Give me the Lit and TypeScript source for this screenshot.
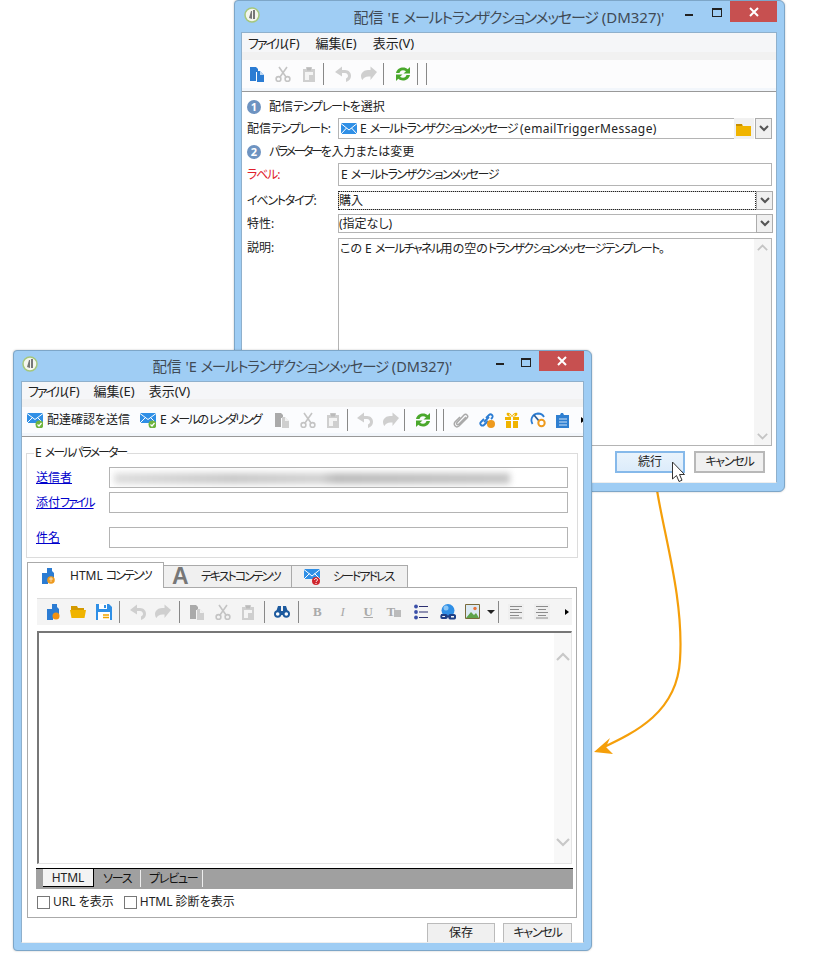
import { LitElement, html, css, svg } from "lit";
import { customElement } from "lit/decorators.js";

const G = "#cfcfcf";
const icons: Record<string, any> = {
  copy: svg`<path d="M1 1h6l2 2v3h-2v9H1z" fill="#2b7cd3"/><path d="M8 5h3l4 4v7H8z" fill="#2b7cd3"/><path d="M11 5v4h4" fill="#fff" opacity=".7"/>`,
  copyg: svg`<path d="M1 1h6l2 2v3h-2v9H1z" fill="#aaa"/><path d="M8 5h3l4 4v7H8z" fill="${G}"/><path d="M11 5v4h4" fill="#fff" opacity=".7"/>`,
  cut: svg`<g fill="none" stroke="#c4c4c4" stroke-width="1.6"><circle cx="3.5" cy="13" r="2.4"/><circle cx="12.5" cy="13" r="2.4"/><path d="M5 11 12 1M11 11 4 1"/></g>`,
  paste: svg`<path d="M2 3h3V1h6v2h3v13H2z" fill="${G}"/><path d="M4 6h8v8H4z" fill="#f4f4f4"/><path d="M6 1.500h4v3H6z" fill="#bbb"/><path d="M8 9h4v5H8z" fill="${G}"/>`,
  undo: svg`<path d="M0 6 7 .5V4h3c4 0 6 3 6 6s-2 5-5 6v-3.500c1-.5 2-1.200 2-2.500s-1-3-3-3H7v3.500z" fill="${G}"/>`,
  redo: svg`<path d="M16 6 9.500.5V4H7C3 4 0 7 0 10c0 1.500.5 3 1.500 4 1-2 3-3.500 6-3.500h2v3.500z" fill="${G}"/>`,
  refresh: svg`<g fill="#4aa82c"><path d="M1 7C2 3 5 1.500 8 1.500c2 0 3.500.7 4.700 1.700L15 1v6.500H8.500L11 5.200C10 4.500 9 4.200 8 4.200 6 4.200 5 5.500 4.500 7z"/><path d="M15 9c-1 4-4 5.500-7 5.500-2 0-3.500-.7-4.700-1.700L1 15V8.500h6.500L5 10.800c1 .7 2 1 3 1 2 0 3-1.300 3.500-2.800z"/></g>`,
  mail: svg`<path d="M0 2h16v11H0z" fill="#2f8fe6"/><path d="M0 2.500 8 9l8-6.500M0 13l5.500-6M16 13l-5.500-6" fill="none" stroke="#fff" stroke-width="1"/>`,
  mailcheck: svg`<path d="M0 1h16v10H0z" fill="#2f8fe6"/><path d="M0 1.500 8 7.500l8-6M0 11l5.500-5.500M16 11l-5.500-5.500" fill="none" stroke="#fff"/><circle cx="12.500" cy="12.500" r="4" fill="#6fb43f"/><path d="m10.500 12.500 1.500 1.500 2.500-3" fill="none" stroke="#fff" stroke-width="1.200"/>`,
  mailq: svg`<path d="M0 0h16v10H0z" fill="#2f8fe6"/><path d="M0 .5 8 7l8-6.500M0 10l5.500-5.500M16 10l-5.500-5.500" fill="none" stroke="#fff"/><circle cx="12" cy="12" r="4" fill="#d0262d"/><path d="M10.500 11c0-2 3-2 3 0 0 1-1.500 1-1.500 2m0 1v1" fill="none" stroke="#fff"/>`,
  attach: svg`<path d="M13 5 6 12c-1.500 1.500-3 0-2-1.500L11 3c2-2 5 1 3 3l-8 8c-3 2.500-6-1-4-4l5-5" fill="none" stroke="#aaa" stroke-width="1.500"/>`,
  link: svg`<g fill="none" stroke="#2b7cd3" stroke-width="1.800"><path d="M7 6 10 3c2-2 5 1 3 3l-1 1M9 9l-4 4c-2 2-5-1-3-3l3-3"/><path d="m5 10 5-5"/></g><circle cx="12" cy="12" r="4" fill="#ee9a1e"/>`,
  gift: svg`<g fill="#f0b400"><path d="M1 5h6v3H1zM9 5h6v3H9zM2 9h5v7H2zM9 9h5v7H9z"/><path d="M3 1c2-1 4 1 5 3 1-2 3-4 5-3 1 1 0 3-2 3.500H5C3 4 2 2 3 1z"/></g><path d="M5 2.500 7 4M11 2.500 9 4" stroke="#fff"/>`,
  gauge: svg`<path d="M2.500 12C0 8 2 2 8 1.500c3 0 5 1.500 6 3.500" fill="none" stroke="#2b7cd3" stroke-width="1.800"/><path d="M4 3 9 9" stroke="#2b5f9a" stroke-width="1.800"/><circle cx="11.500" cy="11" r="3.200" fill="#fff" stroke="#ee9a1e" stroke-width="2"/>`,
  clip: svg`<path d="M1 3h4l1-2h2l1 2h5v13H1z" fill="#2f7fd1"/><path d="M4 7h8M4 10h8M4 13h8" stroke="#cfe3f7"/>`,
  htmlfile: svg`<path d="M2 5h5V0h5v3l2 2v7H8v4H2z" fill="#2b7cd3"/><circle cx="11" cy="12" r="3.800" fill="#ee9a1e"/><path d="M9 11h4M11 9v5" stroke="#fff" stroke-width=".6"/>`,
  newfile: svg`<path d="M2 5h5V0h5v3l2 2v6H8v5H2z" fill="#2b7cd3"/><circle cx="11" cy="12" r="3.500" fill="#f29111"/>`,
  folder: svg`<path d="M0 3h6l1 2H15v10H0z" fill="#f0b400"/><path d="M0 3h6v2H0z" fill="#c88f00"/>`,
  open: svg`<path d="M1 2h6l1 2h6v2H1z" fill="#d49a00"/><path d="M0 6h16l-1.500 8h-13z" fill="#f0b400"/>`,
  save: svg`<path d="M0 0h13l3 3v13H0z" fill="#2f8fe6"/><path d="M3 0h8v5H3z" fill="#fff"/><path d="M8 1h2v3H8z" fill="#2f8fe6"/><path d="M2 8h12v8H2z" fill="#fff"/><path d="M7 11h6M7 13.500h6" stroke="#f0a400" stroke-width="1.500"/>`,
  binoc: svg`<g fill="#1d5a9e"><circle cx="3.700" cy="10" r="3.700"/><circle cx="12.300" cy="10" r="3.700"/><path d="M2 8l2-6h3v6zM14 8l-2-6H9v6zM7 7h2v4H7z"/></g><circle cx="3.700" cy="10" r="1.800" fill="#fff"/><circle cx="12.300" cy="10" r="1.800" fill="#fff"/>`,
  list: svg`<g fill="#3a4fa8"><circle cx="2" cy="2.500" r="1.900"/><circle cx="2" cy="8" r="1.900"/><circle cx="2" cy="13.500" r="1.900"/></g><path d="M5 2.500h9M5 8h9M5 13.500h9" stroke="#2c2f70" stroke-width="1.200"/>`,
  globe: svg`<circle cx="8" cy="6.500" r="6.500" fill="#2f8fe6"/><circle cx="6" cy="4" r="2.500" fill="#8cc6f5"/><g fill="none" stroke="#1d3f86" stroke-width="2"><path d="M1 11h5c1 0 1 3 0 3H2c-1 0-1-3 0-3M10 11h4c1.500 0 1.500 3.500 0 3.500h-4c-1 0-1-3.500 0-3.500M5 12.500h6"/></g>`,
  image: svg`<path d="M.5.500h14v14H.5z" fill="#dbe9f3" stroke="#7a6a3a"/><path d="M1 14l5-6 3 3 2-2 3 5z" fill="#5ea34a"/><circle cx="10" cy="4.500" r="1.700" fill="#e8743b"/>`,
  alignl: svg`<path d="M0 0h16v16H0z" fill="#efefef"/><path d="M2 2.500h12M2 5.500h9M2 8.500h12M2 11.500h9M2 14h12" stroke="#8c8c8c"/>`,
  alignc: svg`<path d="M0 0h16v16H0z" fill="#efefef"/><path d="M2 2.500h12M4 5.500h8M2 8.500h12M4 11.500h8M2 14h12" stroke="#8c8c8c"/>`,
  logo: svg`<circle cx="8" cy="8" r="7" fill="#f4f6ee" stroke="#a5c77c" stroke-width="1.500"/><path d="M5 11 7 4h1v8zM9 3h2v9H9z" fill="#777"/>`,
};

/* Katakana in the original UI font is condensed: wrap each run so it can be tightened. */
const t = (s: string) => s.split(/([\u30A0-\u30FF]+)/).map((p, i) => (i % 2 ? html`<span class="k">${p}</span>` : p));
const ic = (n: string) => html`<svg class="ic" width="16" height="16" viewBox="0 0 16 16">${icons[n]}</svg>`;
const tool = (n: string) => html`<span class="tool">${ic(n)}</span>`;
const sep = html`<i class="sep"></i>`;
const chev = (up = false) => html`<svg class="chev" width="14" height="9" viewBox="0 0 14 9"><path d="${up ? "M1 8 7 2l6 6" : "M1 1l6 6 6-6"}" fill="none" stroke="currentColor" stroke-width="2.200"/></svg>`;
const combo = html`<span class="cbtn"><svg width="10" height="7" viewBox="0 0 10 7"><path d="M1 1l4 4 4-4" fill="none" stroke="#555" stroke-width="2"/></svg></span>`;

const caption = (s: string) => html`<div class="titlebar">
  <svg class="logo" width="16" height="16" viewBox="0 0 16 16">${icons.logo}</svg>
  <div class="title">${t(s)}</div>
  <div class="caps"><span class="cap min"><i></i></span><span class="cap max"><i></i></span><span class="close">
    <svg width="10" height="10" viewBox="0 0 10 10"><path d="M1 1l8 8M9 1 1 9" stroke="#fff" stroke-width="2"/></svg></span></div>
</div>`;
const menu = html`<div class="menu"><span>${t("ファイル(F)")}</span><span>編集(E)</span><span>表示(V)</span></div><div class="band"></div>`;

@customElement("app-root")
export class AppRoot extends LitElement {
  static styles = css`
    :host { display: block; position: relative; width: 818px; height: 970px; background: #fff; overflow: hidden;
      font: 12px/16px "Noto Sans", "Noto Sans CJK JP", sans-serif; font-feature-settings: "palt"; color: #222; }
    * { box-sizing: border-box; }
    .k { letter-spacing: -1.2px; }
    .menu .k { letter-spacing: -2px; }
    .box .k { letter-spacing: -1.5px; }
    .atext .k { letter-spacing: -1.6px; }
    .step.b .k { letter-spacing: -2.4px; }
    .tl .k, .tab .k, legend .k, .fr a .k { letter-spacing: -2px; }
    .lat { letter-spacing: .38px; }
    .flow { position: absolute; left: 0; top: 0; }
    .pointer { position: absolute; left: 671px; top: 461px; z-index: 5; }
    .win { position: absolute; display: flex; flex-direction: column; background: #9fcdf4; border: 1px solid #7da6c8;
      border-radius: 4px 6px 6px 4px; padding: 0 7px 8px 6px; box-shadow: 0 0 2px rgba(0,0,0,.25); }
    .w1 { left: 234px; top: 0; width: 551px; height: 492px; }
    .w2 { left: 13px; top: 350px; width: 579px; height: 601px; z-index: 2; padding: 0 7px 7px 7px; }
    .titlebar { display: flex; align-items: center; height: 31px; flex: none; position: relative; }
    .w2 .titlebar { height: 30px; }
    .logo { margin: -4px 0 0 3px; flex: none; }
    .w2 .logo { margin-left: 1px; }
    .title { position: absolute; left: 0; right: 0; top: 6px; text-align: center; font-size: 15px; line-height: 20px; color: #3f4a55; white-space: nowrap; }
    .w2 .title { font-size: 14.500px; top: 5px; }
    .caps { margin-left: auto; align-self: flex-start; display: flex; position: relative; }
    .cap { width: 28px; height: 21px; position: relative; display: block; }
    .cap i { position: absolute; display: block; }
    .min i { left: 11px; top: 13px; width: 8px; height: 2px; background: #222; }
    .max i { left: 10px; top: 7px; width: 10px; height: 9px; border: 1px solid #222; border-top-width: 2px; }
    .w2 .min i { left: 9px; top: 12px; }
    .w2 .max i { left: 8px; }
    .close { width: 47px; height: 21px; background: #c75050; display: flex; align-items: center; justify-content: center; }
    .w2 .close { width: 45px; height: 20px; }
    .w2 .cap { width: 26px; }
    .client { flex: 1; min-height: 0; background: #fff; border: 1px solid #8fb0cc; border-bottom-color: #eee; overflow: hidden; display: flex; flex-direction: column; }
    .menu { background: #f5f6f8; display: flex; align-items: center; flex: none; white-space: nowrap; font-size: 13px; }
    .w1 .menu { height: 19px; padding-left: 6px; gap: 16px; }
    .w2 .menu { height: 17px; padding-left: 6px; gap: 14px; }
    .band { height: 8px; background: #f1f1f1; flex: none; }
    .tb { display: flex; align-items: center; flex: none; background: #fcfcfd; white-space: nowrap; }
    .w1 .mainbar { height: 28px; padding-left: 2px; }
    .w2 .mainbar { height: 26px; padding-left: 5px; background: #fbfcfe; }
    .rule { height: 4px; flex: none; background: #f2f6fb; border-bottom: 1px solid #999; }
    .tool { display: inline-flex; width: 26px; justify-content: center; flex: none; }
    .w2 .tool { width: 25.500px; }
    .sep { width: 1px; height: 22px; background: #888; flex: none; margin: 0 6px 0 1px; }
    .sep.tight { margin: 0 0 0 2px; }
    .w2 .mainbar .sep { margin: 0 5px 0 .5px; }
    .w2 .mainbar .sep.tight { margin: 0 4.500px 0 1px; }
    .ic { display: block; flex: none; }
    .tl { display: inline-flex; align-items: center; gap: 4px; flex: none; width: 113px; }
    .tl.r { width: 129.500px; }
    .more { width: 0; height: 0; border: 3px solid transparent; border-left: 4px solid #000; margin-left: 5px; flex: none; }

    .body1 { padding: 7px 4px 0 5px; display: flex; flex-direction: column; flex: 1; }
    .step { display: flex; align-items: center; gap: 8px; height: 16px; white-space: nowrap; }
    .step.b { margin-top: 5px; }
    .num { width: 14px; height: 14px; border-radius: 50%; background: #6e93c1; color: #fff; font-size: 11px; font-weight: 700; line-height: 14px; text-align: center; flex: none; }
    .row { display: grid; grid-template-columns: 91px 1fr; align-items: center; white-space: nowrap; margin-top: 5px; }
    .row.m3 { margin-top: 3px; }
    .row.m4 { margin-top: 4px; }
    .row.top { align-items: start; }
    .row.top > span:first-child { padding-top: 2px; }
    .red { color: #e0202c; }
    .box { border: 1px solid #b4b4b4; background: #fff; display: flex; align-items: center; padding-left: 2px; white-space: pre; min-width: 0; }
    .box.tall { height: 23px; }
    .tpl { display: flex; height: 21px; }
    .tpl .box { flex: 1; gap: 3px; border-right: 0; padding-left: 2px; }
    .fold { width: 20px; background: #f1f1f1; display: flex; align-items: center; justify-content: center; flex: none; margin-right: 1px; }
    .cbtn { width: 17px; background: #f0f0f0; border: 1px solid #acacac; display: flex; align-items: center; justify-content: center; flex: none; }
    .sel { display: flex; height: 19px; margin-right: -1px; }
    .sel .box { flex: 1; padding-left: 0; border-right: 0; }
    .focus { outline: 1px dotted #222; outline-offset: -1px; }
    .area { display: flex; border: 1px solid #b4b4b4; height: 208px; align-items: stretch; }
    .atext { flex: 1; padding: 2px 1px; }
    .sb { width: 17px; background: #f5f5f5; color: #c4c4c4; display: flex; flex-direction: column; justify-content: space-between; align-items: center; padding: 5px 0; flex: none; }
    .sb .chev { width: 11px; height: 7px; }
    .btns { display: flex; justify-content: flex-end; flex: none; }
    .btn { background: #f0f0f0; border: 2px solid #b8b8b8; display: flex; align-items: center; justify-content: center; }
    .w1 .btns { gap: 9px; padding-right: 7px; margin-top: 5px; }
    .w1 .btn { width: 71px; height: 22px; }
    .w1 .btn.hot { background: linear-gradient(#e9f3fc, #dcecfb); border-color: #86b9ea; width: 70px; }

    .body2 { padding: 0 5px 0 4px; display: flex; flex-direction: column; flex: 1; min-height: 0; }
    fieldset { margin: 9px 0 0; padding: 0 9px; border: 1px solid #dcdcdc; height: 112px; min-width: 0; flex: none; }
    legend { padding: 0 1px; margin-left: -2px; line-height: 14px; height: 14px; }
    .fr { display: grid; grid-template-columns: 73px 1fr; align-items: center; height: 21px; margin-top: 4px; }
    .fr:first-of-type { margin-top: 7px; }
    .fr.gap { margin-top: 14px; }
    .fr a { color: #00c; text-decoration: underline; }
    .fr .box { height: 21px; position: relative; overflow: hidden; }
    .smear { position: absolute; left: 4px; top: 5px; width: 396px; height: 11px;
      background: linear-gradient(90deg, #ddd, #c9c9c9 30%, #d2d2d2 52%, #bcbcbc 56%, #c6c6c6 100%); filter: blur(3px); }
    .tabs { display: flex; align-items: flex-end; height: 26px; margin: 4px 0 0 1px; position: relative; z-index: 1; white-space: nowrap; flex: none; }
    .tab { height: 23px; border: 1px solid #aaa; border-left-width: 0; background: #f0f0f0; display: flex; align-items: center; flex: none; }
    .tab.on { height: 26px; background: #fff; border-left-width: 1px; border-bottom: 0; width: 137px; padding: 0 0 0 12px; gap: 14px; }
    .tab.t2 { width: 128px; padding-left: 8px; gap: 13px; }
    .tab.t3 { width: 116px; padding-left: 12px; gap: 13px; }
    .bigA { font: 700 23px/23px "Liberation Sans", sans-serif; color: #777; width: 16px; text-align: center; }
    .panel { margin: -1px 1px 0 1px; border: 1px solid #aaa; height: 331px; padding: 10px 4px 0 9px; flex: none; display: flex; flex-direction: column; }
    .inbar { height: 27px; background: #f4f4f4; border-top: 1px solid #ddd; padding-left: 3px; flex: none; display: flex; align-items: center; }
    .inbar .sep { margin: 0 5px 0 2.500px; }
    .fmt { width: 25.500px; text-align: center; font: 700 13px/16px "Liberation Serif", serif; color: #aaa; flex: none; }
    .fmt.b { margin-left: 1px; }
    .fmt.it { font-style: italic; font-weight: 400; }
    .fmt.un { text-decoration: underline; }
    .fmt.tt { margin-right: 3px; }
    .swatch { width: 7px; height: 7px; background: #bbb; display: inline-block; margin-left: -1px; vertical-align: -1px; }
    .dropmini { width: 0; height: 0; border: 4px solid transparent; border-top: 4px solid #222; border-bottom: 0; margin: 0 0 0 1px; flex: none; }
    .inbar .more { margin-left: 10px; }
    .editor { height: 233px; margin-top: 6px; border: 1px solid #e4e4e4; border-top: 2px solid #777; border-left: 2px solid #777; display: flex; justify-content: flex-end; flex: none; }
    .editor .sb { width: 17px; color: #c8c8c8; padding: 19px 0 16px; background: #f8f8f8; }
    .editor .sb .chev { width: 14px; height: 9px; }
    .strip { height: 21px; margin: 4px -1px 0 -1px; background: #a0a0a0; border-top: 1px solid #000; display: flex; align-items: flex-start; padding-left: 7px; flex: none; }
    .strip span.s { height: 17px; line-height: 17px; border-right: 1px solid #eee; flex: none; margin-top: 1px; color: #111; }
    .strip .s1 { width: 47px; padding-left: 9px; }
    .strip .s2 { width: 62px; padding-left: 8px; }
    .strip .on { background: #f3f3f3; border-right: 1px solid #000; border-bottom: 1px solid #000; width: 51px; text-align: center; height: 18px; line-height: 17px; flex: none; }
    .checks { display: flex; align-items: center; height: 14px; margin-top: 6px; gap: 10px; white-space: pre; }
    .checks label { display: flex; align-items: center; gap: 3px; }
    .checks i { display: block; width: 13px; height: 13px; border: 1px solid #777; background: #fff; }
    .w2 .btns { gap: 8px; padding-right: 6px; margin-top: 5px; }
    .w2 .btn { width: 69px; height: 24px; padding-bottom: 4px; border-width: 1px; border-color: #bbb; }
    .w2 .btn:first-child { width: 68px; }
  `;

  render() {
    return html`
      <svg class="flow" width="818" height="970" viewBox="0 0 818 970">
        <path d="M657 490C664 535 684 600 680 660C677 712 636 732 602 748" fill="none" stroke="#f59f0a" stroke-width="2.200"/>
        <path d="M594 752 610 738 606 747 613 754Z" fill="#f59f0a"/>
      </svg>

      <section class="win w1">
        ${caption("配信 'E メールトランザクションメッセージ (DM327)'")}
        <div class="client">
          ${menu}
          <div class="tb mainbar">
            ${tool("copy")}${tool("cut")}${tool("paste")}${sep}${tool("undo")}${tool("redo")}${sep}${tool("refresh")}${sep}<i class="sep tight"></i>
          </div>
          <div class="rule"></div>
          <div class="body1">
            <div class="step"><span class="num">1</span><span>${t("配信テンプレートを選択")}</span></div>
            <div class="row m3"><span>${t("配信テンプレート:")}</span>
              <div class="tpl"><div class="box">${ic("mail")}<span>${t("E メールトランザクションメッセージ ")}<span class="lat">(emailTriggerMessage)</span></span></div><span class="fold">${ic("folder")}</span>${combo}</div></div>
            <div class="step b"><span class="num">2</span><span>${t("パラメーターを入力または変更")}</span></div>
            <div class="row m3"><span class="red">${t("ラベル:")}</span><div class="box tall"><span>${t("E メールトランザクションメッセージ")}</span></div></div>
            <div class="row"><span>${t("イベントタイプ:")}</span><div class="sel"><div class="box focus">購入</div>${combo}</div></div>
            <div class="row m4"><span>特性:</span><div class="sel"><div class="box">(指定なし)</div>${combo}</div></div>
            <div class="row top"><span>説明:</span>
              <div class="area"><div class="atext">${t("この E メールチャネル用の空のトランザクションメッセージテンプレート。")}</div><div class="sb">${chev(true)}${chev()}</div></div></div>
            <div class="btns"><div class="btn hot">続行</div><div class="btn">${t("キャンセル")}</div></div>
          </div>
        </div>
      </section>

      <svg class="pointer" width="14" height="23" viewBox="0 0 14 23"><path d="M1.500 1v17l4-3.500 2.500 6 3-1.300-2.500-5.700h5z" fill="#fff" stroke="#333"/></svg>

      <section class="win w2">
        ${caption("配信 'E メールトランザクションメッセージ (DM327)'")}
        <div class="client">
          ${menu}
          <div class="tb mainbar">
            <span class="tl">${ic("mailcheck")}<span>配達確認を送信</span></span>
            <span class="tl r">${ic("mailcheck")}<span>${t("E メールのレンダリング")}</span></span>
            ${tool("copyg")}${tool("cut")}${tool("paste")}${sep}${tool("undo")}${tool("redo")}${sep}${tool("refresh")}${sep}<i class="sep tight"></i>
            ${tool("attach")}${tool("link")}${tool("gift")}${tool("gauge")}${tool("clip")}<i class="more"></i>
          </div>
          <div class="rule"></div>
          <div class="body2">
            <fieldset>
              <legend>${t("E メールパラメーター")}</legend>
              <div class="fr"><a>送信者</a><div class="box"><span class="smear"></span></div></div>
              <div class="fr"><a>${t("添付ファイル")}</a><div class="box"></div></div>
              <div class="fr gap"><a>件名</a><div class="box"></div></div>
            </fieldset>
            <div class="tabs">
              <div class="tab on">${ic("htmlfile")}<span>${t("HTML コンテンツ")}</span></div>
              <div class="tab t2"><span class="bigA">A</span><span>${t("テキストコンテンツ")}</span></div>
              <div class="tab t3">${ic("mailq")}<span>${t("シードアドレス")}</span></div>
            </div>
            <div class="panel">
              <div class="inbar">
                ${tool("newfile")}${tool("open")}${tool("save")}${sep}${tool("undo")}${tool("redo")}${sep}${tool("copyg")}${tool("cut")}${tool("paste")}${sep}${tool("binoc")}${sep}
                <span class="fmt b">B</span><span class="fmt it">I</span><span class="fmt un">U</span><span class="fmt tt">T<i class="swatch"></i></span>
                ${tool("list")}${tool("globe")}${tool("image")}<i class="dropmini"></i>${sep}${tool("alignl")}${tool("alignc")}<i class="more"></i>
              </div>
              <div class="editor"><div class="sb">${chev(true)}${chev()}</div></div>
              <div class="strip"><span class="on">HTML</span><span class="s s1">${t("ソース")}</span><span class="s s2">${t("プレビュー")}</span></div>
              <div class="checks"><label><i></i>URL を表示</label><label><i></i>HTML 診断を表示</label></div>
            </div>
            <div class="btns"><div class="btn">保存</div><div class="btn">${t("キャンセル")}</div></div>
          </div>
        </div>
      </section>
    `;
  }
}
